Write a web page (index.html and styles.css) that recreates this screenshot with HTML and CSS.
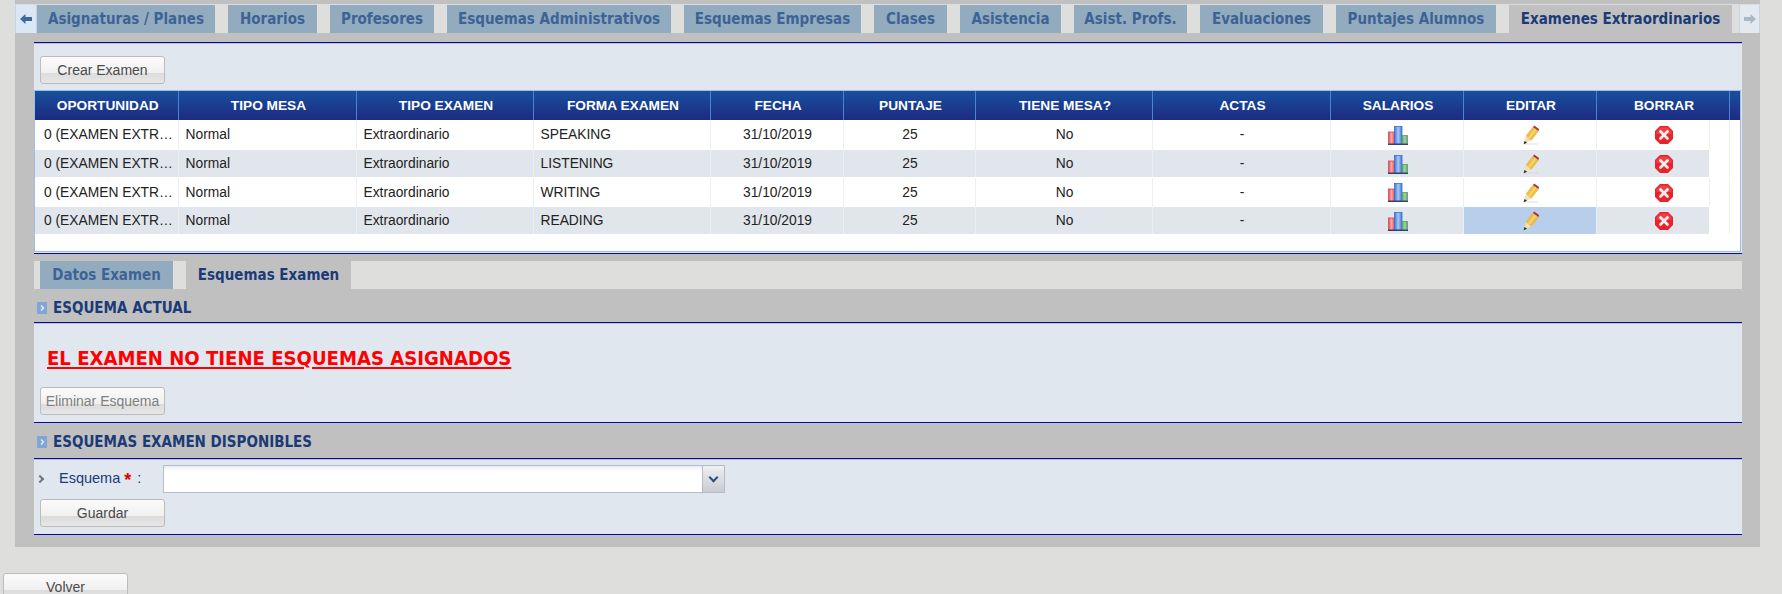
FILE: index.html
```html
<!DOCTYPE html>
<html lang="es">
<head>
<meta charset="utf-8">
<title>Examenes Extraordinarios</title>
<link rel="stylesheet" href="styles.css">
</head>
<body>
<svg class="defs" aria-hidden="true">
  <defs>
    <linearGradient id="gb" x1="0" x2="1" y1="0" y2="0"><stop offset="0" stop-color="#3f78d8"/><stop offset=".5" stop-color="#a9c8f0"/><stop offset="1" stop-color="#3f78d8"/></linearGradient>
    <linearGradient id="gr" x1="0" x2="1" y1="0" y2="0"><stop offset="0" stop-color="#e0525c"/><stop offset=".5" stop-color="#f7a8a8"/><stop offset="1" stop-color="#e0525c"/></linearGradient>
    <linearGradient id="gg" x1="0" x2="1" y1="0" y2="0"><stop offset="0" stop-color="#5aa36a"/><stop offset=".5" stop-color="#a5d0ac"/><stop offset="1" stop-color="#5aa36a"/></linearGradient>
    <symbol id="chart" viewBox="0 0 20 19">
      <rect x="0.5" y="6" width="6" height="12" fill="url(#gr)" stroke="#d8434e" stroke-width=".8"/>
      <rect x="6.500" y="0.500" width="7.500" height="17.500" fill="url(#gb)" stroke="#3a6fd0" stroke-width=".8"/>
      <rect x="14" y="9.500" width="5.500" height="8.500" fill="url(#gg)" stroke="#5b9e68" stroke-width=".8"/>
      <path d="M0 18.300H20" stroke="#2b2f66" stroke-width="1.200"/>
    </symbol>
    <symbol id="pencil" viewBox="0 0 16 20">
      <path d="M1 19H15" stroke="#d0d3d8" stroke-width="1" opacity=".7"/>
      <path d="M3 11L10 2L15.500 6L8 15.500Z" fill="#f2bd45" stroke="#e0a82f" stroke-width=".5"/>
      <path d="M6 13L12.500 4.500" stroke="#f8d97e" stroke-width="1.600"/>
      <path d="M10 2L11.200 .5L16 4L15.500 6Z" fill="#a8323f"/>
      <path d="M3 11L8 15.500L.6 19.200Z" fill="#f3dfb4"/>
      <path d="M1.500 16L4 17.700L.6 19.200Z" fill="#222"/>
    </symbol>
    <symbol id="cross" viewBox="0 0 18 18">
      <path d="M5 0H13L18 5V13L13 18H5L0 13V5Z" fill="#e8232b"/>
      <path d="M5.500 1.500H12.500L16.500 5.500V8H1.500V5.500Z" fill="#f2545a" opacity=".6"/>
      <path d="M5.500 5.500L12.500 12.500M12.500 5.500L5.500 12.500" stroke="#fbeeee" stroke-width="2.800" stroke-linecap="round"/>
    </symbol>
    <symbol id="bullet" viewBox="0 0 10 12">
      <rect width="10" height="12" rx="1" fill="#7fa6d6"/>
      <path d="M4 3.500L6.500 6L4 8.500" fill="none" stroke="#e8f0fa" stroke-width="1.400"/>
    </symbol>
    <symbol id="arrow" viewBox="0 0 12 10">
      <path d="M0 5L5.500 0V3H12V7H5.500V10Z" fill="currentColor"/>
    </symbol>
  </defs>
</svg>

<div class="panel">
  <div class="tabstrip">
    <span class="nav nav-left"><svg class="ic-arrow"><use href="#arrow"/></svg></span>
    <div class="tabs">
      <a class="tab t1">Asignaturas / Planes</a>
      <a class="tab t2">Horarios</a>
      <a class="tab t3">Profesores</a>
      <a class="tab t4">Esquemas Administrativos</a>
      <a class="tab t5">Esquemas Empresas</a>
      <a class="tab t6">Clases</a>
      <a class="tab t7">Asistencia</a>
      <a class="tab t8">Asist. Profs.</a>
      <a class="tab t9">Evaluaciones</a>
      <a class="tab t10">Puntajes Alumnos</a>
      <a class="tab active t11">Examenes Extraordinarios</a>
    </div>
    <span class="nav nav-right"><svg class="ic-arrow flip"><use href="#arrow"/></svg></span>
  </div>

  <div class="content">
    <section class="pane pane-top">
      <button class="btn btn-crear">Crear Examen</button>
      <div class="grid-wrap">
        <table class="grid">
          <colgroup>
            <col class="c143"><col class="c178"><col class="c177"><col class="c177"><col class="c133"><col class="c132"><col class="c177"><col class="c178"><col class="c133"><col class="c133"><col class="c133"><col>
          </colgroup>
          <thead>
            <tr><th>OPORTUNIDAD</th><th>TIPO MESA</th><th>TIPO EXAMEN</th><th>FORMA EXAMEN</th><th>FECHA</th><th>PUNTAJE</th><th>TIENE MESA?</th><th>ACTAS</th><th>SALARIOS</th><th>EDITAR</th><th>BORRAR</th><th class="filler"></th></tr>
          </thead>
          <tbody>
            <tr><td class="first">0 (EXAMEN EXTR…</td><td>Normal</td><td>Extraordinario</td><td>SPEAKING</td><td class="ctr">31/10/2019</td><td class="ctr">25</td><td class="ctr">No</td><td class="ctr">-</td><td class="ctr"><svg class="ic-chart"><use href="#chart"/></svg></td><td class="ctr"><svg class="ic-pencil"><use href="#pencil"/></svg></td><td class="ctr last"><svg class="ic-cross"><use href="#cross"/></svg></td><td class="filler"></td></tr>
            <tr><td class="first">0 (EXAMEN EXTR…</td><td>Normal</td><td>Extraordinario</td><td>LISTENING</td><td class="ctr">31/10/2019</td><td class="ctr">25</td><td class="ctr">No</td><td class="ctr">-</td><td class="ctr"><svg class="ic-chart"><use href="#chart"/></svg></td><td class="ctr"><svg class="ic-pencil"><use href="#pencil"/></svg></td><td class="ctr last"><svg class="ic-cross"><use href="#cross"/></svg></td><td class="filler"></td></tr>
            <tr><td class="first">0 (EXAMEN EXTR…</td><td>Normal</td><td>Extraordinario</td><td>WRITING</td><td class="ctr">31/10/2019</td><td class="ctr">25</td><td class="ctr">No</td><td class="ctr">-</td><td class="ctr"><svg class="ic-chart"><use href="#chart"/></svg></td><td class="ctr"><svg class="ic-pencil"><use href="#pencil"/></svg></td><td class="ctr last"><svg class="ic-cross"><use href="#cross"/></svg></td><td class="filler"></td></tr>
            <tr><td class="first">0 (EXAMEN EXTR…</td><td>Normal</td><td>Extraordinario</td><td>READING</td><td class="ctr">31/10/2019</td><td class="ctr">25</td><td class="ctr">No</td><td class="ctr">-</td><td class="ctr"><svg class="ic-chart"><use href="#chart"/></svg></td><td class="ctr selected"><svg class="ic-pencil"><use href="#pencil"/></svg></td><td class="ctr last"><svg class="ic-cross"><use href="#cross"/></svg></td><td class="filler"></td></tr>
          </tbody>
        </table>
      </div>
    </section>

    <div class="subtabs">
      <a class="subtab st1">Datos Examen</a>
      <a class="subtab st2 active">Esquemas Examen</a>
    </div>

    <h3 class="sec-title"><svg class="ic-bullet"><use href="#bullet"/></svg>ESQUEMA ACTUAL</h3>
    <section class="pane pane-actual">
      <p class="alert">EL EXAMEN NO TIENE ESQUEMAS ASIGNADOS</p>
      <button class="btn disabled" disabled>Eliminar Esquema</button>
    </section>

    <h3 class="sec-title sec-second"><svg class="ic-bullet"><use href="#bullet"/></svg>ESQUEMAS EXAMEN DISPONIBLES</h3>
    <section class="pane pane-form">
      <div class="field">
        <span class="handle"></span>
        <label class="label">Esquema <span class="req">*</span> :</label>
        <div class="combo"><span class="combo-arrow"></span></div>
      </div>
      <button class="btn">Guardar</button>
    </section>
  </div>
</div>

<button class="btn btn-volver">Volver</button>
</body>
</html>
```

FILE: styles.css
```css
html, body {
  margin: 0;
  padding: 0;
  height: 594px;
  overflow: hidden;
  background: #dededc;
  font-family: "Liberation Sans", Arial, sans-serif;
}
.defs { position: absolute; width: 0; height: 0; }

.panel {
  margin-left: 15px;
  width: 1745px;
  height: 547px;
  box-sizing: border-box;
  padding-top: 4px;
  background: #c0c0c0;
}

.tabstrip {
  display: flex;
  height: 29px;
  box-sizing: border-box;
  border-top: 1px solid #d8dde2;
  background: #dededc;
}
.nav {
  display: flex;
  align-items: center;
  justify-content: center;
  width: 22px;
  box-sizing: border-box;
  background: #dce7f5;
  border: 1px solid #c3d4ea;
  border-width: 0 1px;
  color: #3d6a9c;
}
.nav-right { margin-left: 7px; width: 21px; color: #a8b8c8; background: #e4e9f0; }
.ic-arrow { width: 12px; height: 10px; }
.flip { transform: scaleX(-1); }
.tabs { display: flex; gap: 13px; }
.tab {
  padding-top: 1px;
  background: #92abbf;
  color: #3d6394;
  font: bold 15px/27px "DejaVu Sans Condensed", sans-serif;
  text-align: center;
  white-space: nowrap;
}
.tab.active { background: #c0c0c0; color: #1b3a78; }
.t1 { width: 178px; }
.t2 { width: 89px; }
.t3 { width: 104px; }
.t4 { width: 224px; }
.t5 { width: 177px; }
.t6 { width: 73px; }
.t7 { width: 101px; }
.t8 { width: 113px; }
.t9 { width: 123px; }
.t10 { width: 160px; }
.t11 { width: 223px; }

.content { margin: 9px 18px 0 19px; }

.pane {
  box-sizing: border-box;
  background: #e0e7ef;
  border-top: 1px solid #0a0a90;
  border-bottom: 1px solid #0a0a90;
  box-shadow: inset 0 1px 0 #b9bde2, 0 1px 0 #b9bde2;
}
.pane-top { height: 212px; padding-top: 13px; }
.btn {
  display: block;
  width: 125px;
  height: 28px;
  box-sizing: border-box;
  padding: 0;
  border: 1px solid #bcbcbc;
  border-radius: 3px;
  background: linear-gradient(#fbfbfb 0, #f0f0f0 60%, #dcdcdc 62%, #e6e6e6 100%);
  color: #4a4a4a;
  font: 14px "Liberation Sans", Arial, sans-serif;
}
.btn-crear { margin-left: 6px; }
.disabled { color: #808080; }

.grid-wrap {
  margin: 6px 1px 0 0;
  height: 162px;
  box-sizing: border-box;
  background: #fff;
  border: 1px solid #9cbcea;
  overflow: hidden;
}
.grid {
  border-collapse: collapse;
  table-layout: fixed;
  width: 1705px;
  font-size: 13.8px;
  color: #222;
}
.c143 { width: 143px; }
.c178 { width: 178px; }
.c177 { width: 177px; }
.c133 { width: 133px; }
.c132 { width: 132px; }
.grid th {
  height: 29px;
  padding: 0 0 0 3px;
  box-sizing: border-box;
  background: linear-gradient(#17509d, #1d2a80);
  border-right: 1px solid #4a86d0;
  color: #fff;
  font: bold 13.7px "Liberation Sans", Arial, sans-serif;
}
.grid th.filler { border-right: 0; }
.grid td {
  height: 29px;
  box-sizing: border-box;
  padding: 1px 2px 0 7px;
  border-right: 1px solid #eeeff2;
  white-space: nowrap;
}
.grid tbody tr:nth-child(even) td { height: 28px; }
.grid tbody tr:nth-child(even) td:not(.filler) {
  background: #e1e6ed;
  border-top: 1px solid #fff;
  border-bottom: 1px solid #fff;
}
.grid td.first { padding-left: 9px; }
.grid td.ctr { padding: 1px 0 0 2px; text-align: center; }
.grid td.filler { border-right: 0; padding: 0; }
.grid td.last {
  background: linear-gradient(#eeeff2, #eeeff2) no-repeat 112px 0 / 1px 100%;
}
.grid tbody tr:nth-child(even) td.last {
  background: linear-gradient(#e1e6ed, #e1e6ed) no-repeat 0 0 / 112px 100%;
}
.grid tbody tr:nth-child(even) td.selected { background: #b8cfeb; }
.ic-chart { width: 20px; height: 19px; vertical-align: middle; margin-top: 1px; }
.ic-pencil { width: 16px; height: 20px; vertical-align: middle; margin-top: 1px; }
.ic-cross { width: 18px; height: 18px; vertical-align: middle; margin-top: 1px; }

.subtabs {
  display: flex;
  gap: 13px;
  margin-top: 7px;
  padding-left: 6px;
  height: 28px;
  background: #dededc;
}
.subtab {
  background: #92abbf;
  color: #3d6394;
  font: bold 15px/29px "DejaVu Sans Condensed", sans-serif;
  text-align: center;
}
.subtab.active { background: #c0c0c0; color: #1b3a78; }
.st1 { width: 133px; }
.st2 { width: 165px; }

.sec-title {
  display: flex;
  align-items: center;
  gap: 6px;
  height: 33px;
  margin: 0;
  padding: 4px 0 0 3px;
  box-sizing: border-box;
  color: #1b3a78;
  font: bold 15px "DejaVu Sans Condensed", sans-serif;
}
.sec-second { height: 35px; padding-top: 2px; }
.ic-bullet { width: 10px; height: 12px; }

.pane-actual { height: 101px; padding: 20px 0 0 6px; }
.alert {
  margin: 0 0 14px 7px;
  height: 30px;
  color: #f00;
  font: bold 20.1px/30px "DejaVu Sans Condensed", sans-serif;
  text-decoration: underline;
}

.pane-form { height: 77px; padding: 6px 0 0 6px; }
.field { display: flex; align-items: center; height: 28px; margin-bottom: 6px; }
.handle {
  width: 6px;
  height: 6px;
  box-sizing: border-box;
  margin: 0 16px 0 -3px;
  transform: rotate(45deg);
  border: solid #777;
  border-width: 2px 2px 0 0;
}
.label { width: 104px; color: #1b3a78; font-size: 14.5px; }
.req { margin-right: 2px; color: #e00000; font-size: 18px; font-weight: bold; vertical-align: -3px; line-height: 1; }
.combo {
  position: relative;
  width: 562px;
  height: 28px;
  box-sizing: border-box;
  background: linear-gradient(#e8edf2, #fff 20%);
  border: 1px solid #b4bcc6;
}
.combo-arrow {
  position: absolute;
  top: 0;
  right: 0;
  bottom: 0;
  width: 21px;
  background: linear-gradient(#eef0f2, #c8ccd2);
  border-left: 1px solid #b4bcc6;
}
.combo-arrow::after {
  content: "";
  position: absolute;
  left: 7px;
  top: 8px;
  width: 5px;
  height: 5px;
  border: solid #2f4f80;
  border-width: 0 2px 2px 0;
  transform: rotate(45deg);
}
.btn-volver { margin: 26px 0 0 3px; }
```
